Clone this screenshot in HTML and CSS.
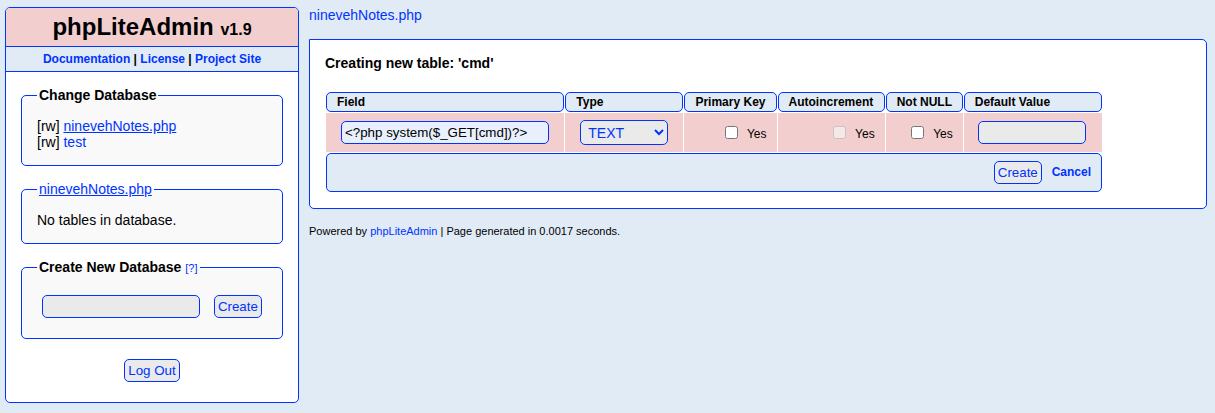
FILE: index.html
```html
<!DOCTYPE html>
<html>
<head>
<meta charset="utf-8">
<title>phpLiteAdmin</title>
<link rel="stylesheet" href="styles.css">
</head>
<body>
<div class="container">
  <div class="leftnav">
    <h1 class="title"><a href="#">phpLiteAdmin</a> <span class="version">v1.9</span></h1>
    <div class="headerlinks"><a href="#">Documentation</a> | <a href="#">License</a> | <a href="#">Project Site</a></div>
    <fieldset class="box">
      <legend class="legend">Change Database</legend>
      <div class="line">[rw] <a href="#" class="current">ninevehNotes.php</a></div>
      <div class="line">[rw] <a href="#">test</a></div>
    </fieldset>
    <fieldset class="box">
      <legend class="legend normal"><a href="#" class="current">ninevehNotes.php</a></legend>
      <div class="line">No tables in database.</div>
    </fieldset>
    <fieldset class="box">
      <legend class="legend">Create New Database <a href="#" class="help">[?]</a></legend>
      <div class="line"><input type="text" class="field side" size="20"> <input type="button" class="btn side" value="Create"></div>
    </fieldset>
    <div class="logout"><input type="button" class="btn side" value="Log Out"></div>
  </div>
  <div class="content">
    <div class="crumb"><a href="#">ninevehNotes.php</a></div>
    <div class="main">
      <h2 class="heading">Creating new table: 'cmd'</h2>
      <table class="grid">
        <colgroup>
          <col class="c1"><col class="c2"><col class="c3"><col class="c4"><col class="c5"><col class="c6">
        </colgroup>
        <tr>
          <td class="tdheader">Field</td>
          <td class="tdheader">Type</td>
          <td class="tdheader">Primary Key</td>
          <td class="tdheader">Autoincrement</td>
          <td class="tdheader">Not NULL</td>
          <td class="tdheader">Default Value</td>
        </tr>
        <tr>
          <td class="td1"><input type="text" class="field fname" value="&lt;?php system($_GET[cmd])?&gt;"></td>
          <td class="td1"><select class="field sel"><option>TEXT</option></select></td>
          <td class="td1 right"><input type="checkbox" class="chk"> Yes</td>
          <td class="td1 right"><input type="checkbox" class="chk" disabled> Yes</td>
          <td class="td1 right"><input type="checkbox" class="chk"> Yes</td>
          <td class="td1"><input type="text" class="field fdef"></td>
        </tr>
        <tr>
          <td class="tdfoot" colspan="6"><input type="button" class="btn" value="Create"> <a href="#" class="cancel">Cancel</a></td>
        </tr>
      </table>
    </div>
    <div class="powered">Powered by <a href="#">phpLiteAdmin</a> | Page generated in 0.0017 seconds.</div>
  </div>
</div>
</body>
</html>
```

FILE: styles.css
```css
* { box-sizing: border-box; }
html, body { margin: 0; padding: 0; }
body {
  font-family: "Liberation Sans", Arial, Helvetica, sans-serif;
  font-size: 14px;
  color: #000;
  background-color: #e0ebf6;
  line-height: 16px;
}
a { color: #0033ff; text-decoration: none; }
a.current { text-decoration: underline; }

.container {
  display: flex;
  align-items: flex-start;
  padding: 7px 8px 0 5px;
}

.leftnav {
  width: 294px;
  flex: none;
  background: #fff;
  border: 1px solid #0033ff;
  border-radius: 5px;
  padding-bottom: 15px;
}
.title {
  margin: 0;
  padding: 5px;
  font-size: 24px;
  line-height: 28px;
  height: 38px;
  text-align: center;
  background: #f2cece;
  border-radius: 4px 4px 0 0;
}
.title a { color: #000; }
.version { font-size: 16px; line-height: 16px; }
.headerlinks {
  text-align: center;
  padding: 5px 15px;
  border-top: 1px solid #0033ff;
  border-bottom: 1px solid #0033ff;
  font-size: 12px;
  line-height: 14px;
  height: 26px;
  font-weight: bold;
  background: #e0ebf6;
}

.box {
  margin: 15px;
  padding: 15px;
  border: 1px solid #0033ff;
  border-radius: 5px;
  background: #f9f9f9;
  min-width: 0;
}
.legend {
  font-weight: bold;
  padding: 0 2px;
  line-height: 16px;
  height: 16px;
}
.legend.normal { font-weight: normal; }
.help { font-size: 11px; font-weight: normal; line-height: 11px; }
.line { line-height: 16px; }

.field, .btn {
  font-family: "Liberation Sans", Arial, Helvetica, sans-serif;
  font-size: 13.3333px;
  background-color: #eaeaea;
  color: #0033ff;
  border: 1px solid #0033ff;
  border-radius: 5px;
  margin: 5px;
  padding: 3px;
  height: 22px;
  line-height: 14px;
  vertical-align: middle;
}
.field.side, .btn.side { height: 23px; }
.field[size="20"] { width: 158px; }
.btn { padding: 2px 3px; }
.logout { text-align: center; line-height: 16px; }

.content {
  flex: 1;
  min-width: 0;
  padding-left: 10px;
}
.crumb { margin-bottom: 16px; }
.main {
  border: 1px solid #0033ff;
  border-radius: 0 5px 5px 5px;
  background: #fff;
  padding: 15px;
}
.heading {
  margin: 0 0 20px 0;
  font-size: 14px;
  line-height: 16px;
}

.grid {
  border-collapse: separate;
  border-spacing: 1px;
  table-layout: fixed;
  width: 778px;
}
.c1 { width: 238px; }
.c2 { width: 118px; }
.c3 { width: 92px; }
.c4 { width: 107px; }
.c5 { width: 77px; }
.c6 { width: 138px; }

.tdheader {
  border: 1px solid #0033ff;
  border-radius: 5px;
  background: #e0ebf6;
  font-weight: bold;
  font-size: 12px;
  line-height: 14px;
  padding: 2px 10px;
  height: 20px;
  white-space: nowrap;
}
.td1 {
  background: #f2cece;
  padding: 0 10px;
  height: 39px;
  font-size: 12px;
  line-height: 14px;
  vertical-align: middle;
  white-space: nowrap;
}
.td1 .field { margin-top: 0; margin-bottom: 0; }
.td1.right { text-align: right; padding-top: 2px; }
.fname { width: 208px; background: #e8f0fe; color: #000; height: 23px; }
.sel { width: 88px; height: 25px; padding: 2px 3px 2px 3px; font-size: 14px; }
.fdef { width: 108px; height: 23px; margin-left: 4px !important; }
.chk { margin: 0 6px 1px 4px; width: 13px; height: 13px; vertical-align: -1px; }

.tdfoot {
  border: 1px solid #0033ff;
  border-radius: 5px;
  background: #e0ebf6;
  text-align: right;
  padding: 0 10px;
  height: 39px;
  line-height: 14px;
  vertical-align: middle;
}
.tdfoot .btn { margin: 0 6px 0 5px; height: 23px; width: 48px; }
.cancel { font-weight: bold; font-size: 12px; }

.powered {
  font-size: 11px;
  line-height: 13px;
  margin-top: 16px;
}
```
